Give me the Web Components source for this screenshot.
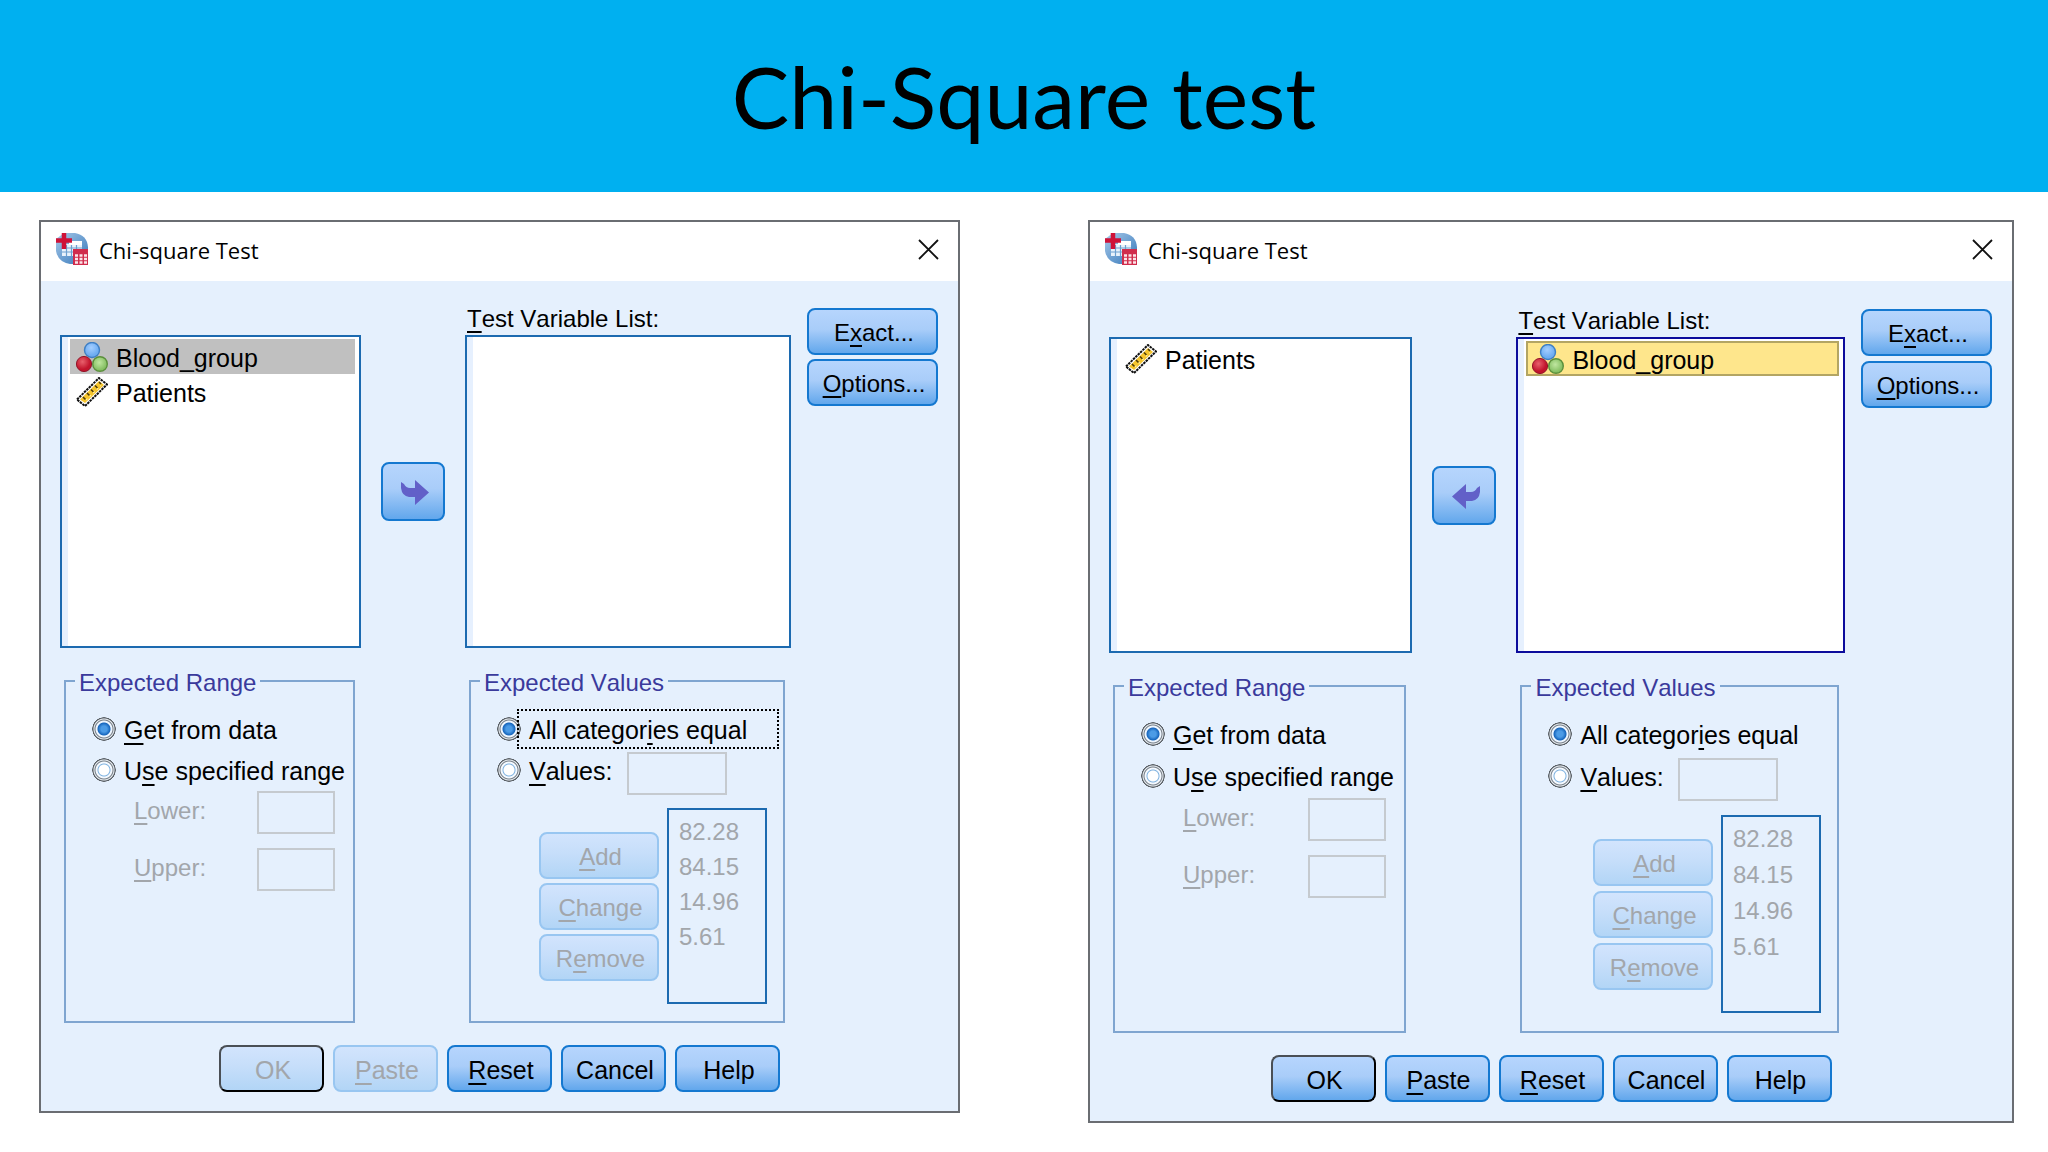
<!DOCTYPE html>
<html lang="en">
<head>
<meta charset="utf-8">
<title>Chi-Square test</title>
<style>
  html, body { margin: 0; background: #fff; }
  body { font-family: "Liberation Sans", Arial, sans-serif; color: #000; }
</style>
</head>
<body>
<slide-page>
  <span slot="title">Chi-Square test</span>
  <chi-dialog state="before"></chi-dialog>
  <chi-dialog state="after"></chi-dialog>
</slide-page>

<script>
const define = (name, html, setup) => {
  const template = document.createElement('template');
  customElements.define(name, class extends HTMLElement {
    connectedCallback() {
      if (this.shadowRoot) return;
      const root = this.attachShadow({ mode: 'open' });
      template.innerHTML = typeof html === 'function' ? html(this) : html;
      root.append(template.content.cloneNode(true));
      if (setup) setup(this, root);
    }
  });
};

const mnemonic = `::slotted(u) { text-decoration: underline; text-decoration-thickness: 2px; text-underline-offset: 4px; text-decoration-skip-ink: none; }`;

const icons = {
  nominal: `<svg viewBox="0 0 32 30" width="32" height="30" aria-hidden="true">
    <defs>
      <radialGradient id="b" cx=".45" cy=".35"><stop offset="0" stop-color="#a4ceff"/><stop offset="1" stop-color="#6eadf2"/></radialGradient>
      <radialGradient id="r" cx=".4" cy=".35"><stop offset="0" stop-color="#e8606c"/><stop offset="1" stop-color="#c2142c"/></radialGradient>
      <radialGradient id="g" cx=".45" cy=".4"><stop offset="0" stop-color="#c0e6a0"/><stop offset="1" stop-color="#86c064"/></radialGradient>
    </defs>
    <circle cx="16" cy="8" r="7.500" fill="url(#b)" stroke="#3f7fc4" stroke-width="1.400"/>
    <circle cx="24" cy="22" r="7.300" fill="url(#g)" stroke="#5b8f3c" stroke-width="1.400"/>
    <circle cx="8" cy="22" r="7.600" fill="url(#r)" stroke="#93162a" stroke-width="1"/>
  </svg>`,
  scale: `<svg viewBox="0 0 32 30" width="32" height="30" aria-hidden="true">
    <path d="M1 22.500 L23 1 L31 7.500 L9 29 Z" fill="#fff" stroke="#111" stroke-width="2" stroke-dasharray="2.500 .8"/>
    <path d="M4 22.500 L23 4 L28 8 L9 26 Z" fill="#f6c52c"/>
    <path d="M7 20 l2.500 2.500 M11 16 l2.500 2.500 M15 12.500 l2.500 2.500 M19 8.500 l2.500 2.500 M23 5 l2 2" stroke="#4b3a08" stroke-width="1.600"/>
    <path d="M10 23 L25 8.500" stroke="#fff0a0" stroke-width="1.200" stroke-dasharray="2 3"/>
  </svg>`,
  app: `<svg viewBox="0 0 32 32" width="32" height="32" aria-hidden="true">
    <defs><linearGradient id="s" x1="0" y1="0" x2="1" y2="1"><stop offset="0" stop-color="#a9c9e8"/><stop offset=".6" stop-color="#6298cd"/><stop offset="1" stop-color="#3a76b4"/></linearGradient></defs>
    <path d="M8 0 H19 Q31 2 32 14 V31 H14 Q2 29 0 18 V6 Z" fill="url(#s)"/>
    <rect x="6" y="11" width="20" height="12" fill="#e9f2fb"/>
    <rect x="13" y="8" width="13" height="4" fill="#fff"/>
    <path d="M6 15 H26 M6 19 H26 M10.500 12 V23 M15.500 12 V23 M20.500 12 V23" stroke="#6c9fd0" stroke-width="1.200"/>
    <path d="M8 0 V16 M0 7.500 H16" stroke="#cf1238" stroke-width="4.500"/>
    <rect x="17" y="16" width="15" height="16" fill="#d02c4c"/>
    <path d="M19 22.500 h3 M23.500 22.500 h3 M28 22.500 h3 M19 26 h3 M23.500 26 h3 M28 26 h3 M19 29.500 h3 M23.500 29.500 h3 M28 29.500 h3" stroke="#fbe4e8" stroke-width="2.300"/>
  </svg>`,
  arrow: `<svg viewBox="0 0 28 25" width="28" height="25" aria-hidden="true">
    <path d="M0 2 L3 4 Q5 8 9 8 H14 V0 L28 12.500 L14 25 V17 H8 Q1 16 0 8 Z" fill="#6260c8"/></svg>`,
  close: `<svg viewBox="0 0 21 21" width="21" height="21" aria-hidden="true">
    <path d="M1 1 L20 20 M20 1 L1 20" stroke="#111" stroke-width="1.800"/></svg>`
};

define('slide-page', `
  <style>
    :host { display: block; }
    header { display: flex; align-items: center; justify-content: center; height: 192px; background: #00b0f0; }
    h1 { margin: 0; font: 400 86px/100px Lato, sans-serif; }
    main { display: grid; grid-template-columns: 921fr 926fr; align-items: start; gap: 128px; padding: 28px 34px 28px 39px; }
  </style>
  <header><h1><slot name="title"></slot></h1></header>
  <main><slot></slot></main>`);

define('push-button', host => `
  <style>
    :host { display: block; }
    button {
      display: flex; align-items: center; justify-content: center; box-sizing: border-box;
      width: 100%; height: 47px; margin: 0; padding: 2px 0 0 3px;
      border: 2px solid #1478d0; border-radius: 8px;
      background: linear-gradient(#b6d5fd, #a9cdf9 45%, #62a7ec);
      font: inherit; font-kerning: none; white-space: pre; color: #000;
    }
    button:disabled { border-color: #98c6f1; background: linear-gradient(#d2e4fd, #c6defa 45%, #b2d5f6); color: #a2a6ab; }
    :host([default]) button { border-color: #4a4f55 #000 #000 #4a4f55; }
    :host([tall]) button { height: 59px; }
    :host([flip]) svg { transform: scaleX(-1); }
    ${mnemonic}
  </style>
  <button type="button" ${host.hasAttribute('disabled') ? 'disabled' : ''} ${host.title ? `aria-label="${host.title}"` : ''}><slot></slot>${host.hasAttribute('tall') ? icons.arrow : ''}</button>`);

define('variable-item', host => `
  <style>
    :host { display: flex; align-items: center; gap: 8px; box-sizing: border-box; height: 35px; margin: 0 4px 0 8px; padding: 0 4px; border: 2px solid transparent; white-space: nowrap; font-kerning: none; }
    :host([highlight="idle"]) { background: #c0c0c0; border-color: #c0c0c0; }
    :host([highlight="active"]) { background: #fee68c; border-color: #b3a563; }
    svg { flex: none; }
    span { padding-top: 2px; }
  </style>
  ${icons[host.getAttribute('measure')]}<span><slot></slot></span>`,
  host => host.setAttribute('role', 'option'));

define('variable-list', `
  <style>
    :host { display: block; box-sizing: border-box; padding-top: 2px; border: 2px solid #1c6ab0; background: linear-gradient(90deg, #e6f0fe 6px, #fff 6px); }
    :host([focused]) { border-color: #0c0c9c; }
  </style>
  <slot></slot>`,
  host => host.setAttribute('role', 'listbox'));

define('group-box', host => `
  <style>
    :host { display: block; min-width: 0; margin: 19px 6px 0 4px; }
    fieldset { box-sizing: border-box; height: 100%; min-width: 0; margin: 0; padding: 13px 16px 0 26px; border: 2px solid #7fa5d0; }
    legend { margin-left: -17px; padding: 4px 4px 0; line-height: 24px; font-size: 24px; color: #3a3a9c; white-space: nowrap; font-kerning: none; }
  </style>
  <fieldset><legend>${host.getAttribute('caption')}</legend><slot></slot></fieldset>`,
  host => host.addEventListener('pick', e => {
    for (const option of host.querySelectorAll('radio-option'))
      if (option !== e.target) option.shadowRoot.querySelector('input').checked = false;
  }));

define('radio-option', host => `
  <style>
    :host { display: flex; align-items: center; height: var(--row); }
    label { display: flex; align-items: center; flex: 1; height: 100%; white-space: nowrap; font-kerning: none; }
    input {
      appearance: none; flex: none; width: 24px; height: 24px; margin: 0; border-radius: 50%;
      background: radial-gradient(circle, #fff 0 5px, #7fb2e0 6px, #f4f9ff 7px, #f4f9ff 8px, #707880 9px, #eef3f8 10px, #5a6066 11px, #5a6066 11.5px, transparent 12px);
    }
    input:checked {
      background: radial-gradient(circle, #4b9be6 0 3px, #1766bd 6px, #eef6ff 7px, #eef6ff 8px, #707880 9px, #eef3f8 10px, #5a6066 11px, #5a6066 11.5px, transparent 12px);
    }
    span { flex: 1; box-sizing: border-box; padding: 2px 0 0 8px; }
    :host([focused]) { margin-right: -12px; }
    :host([focused]) span { height: 40px; margin-left: -4px; padding: 3px 0 0 10px; border: 2px dotted #000; line-height: 32px; }
    ${mnemonic}
  </style>
  <label><input type="radio" ${host.hasAttribute('checked') ? 'checked' : ''}><span><slot></slot></span></label>`,
  (host, root) => root.querySelector('input').addEventListener('change', () =>
    host.dispatchEvent(new CustomEvent('pick', { bubbles: true }))));

define('range-field', `
  <style>
    :host { display: block; }
    label { display: flex; align-items: center; justify-content: space-between; font-kerning: none; color: #a2a6ab; }
    span { padding-bottom: 3px; }
    input { box-sizing: border-box; width: 78px; height: 43px; margin: 0; border: 2px solid #c5cacf; border-radius: 0; background: transparent; font: inherit; }
    ${mnemonic}
  </style>
  <label><span><slot></slot></span><input type="text" disabled></label>`);

define('chi-dialog', host => {
  const after = host.getAttribute('state') === 'after';
  const off = after ? '' : 'disabled';
  return `
  <style>
    :host {
      --row: 41px; --head: 24px; --list: 313px; --group: 356px; --values: 196px; --line: 35px; --side: 27px; --gap: 4px;
      display: block; min-width: 0; border: 2px solid #6a6d72; background: #e5f0fd; font-size: 24px; line-height: 28px;
    }
    :host([state="after"]) { --row: 42px; --head: 26px; --list: 316px; --group: 361px; --values: 198px; --line: 36px; --side: 28px; --gap: 5px; }
    .bar { display: flex; align-items: center; gap: 11px; box-sizing: border-box; height: 59px; padding: 0 19px 5px 15px; background: #fff; }
    .bar h2 { flex: 1; margin: 0; padding-top: 2px; font: 400 22px/30px "Open Sans", sans-serif; }
    .bar button { display: flex; margin: 0; padding: 0; border: 0; background: none; }
    .body { display: grid; grid-template-columns: minmax(0, 301fr) 104px minmax(0, 326fr) 147px; padding: 0 20px 0 19px; }
    .head { padding: var(--head) 2px 2px; white-space: nowrap; font-kerning: none; }
    .head u { text-decoration-thickness: 2px; text-underline-offset: 4px; }
    variable-list { height: var(--list); }
    .source { padding-top: calc(var(--head) + 30px); }
    .move { display: flex; align-items: center; justify-content: center; padding-top: calc(var(--head) + 30px); }
    .move push-button { width: 64px; }
    .side { display: flex; flex-direction: column; gap: var(--gap); padding: var(--side) 0 0 16px; }
    group-box { height: var(--group); }
    .values-group { grid-column: 3; }
    variable-item, radio-option { font-size: 25px; }
    .range { display: flex; flex-direction: column; gap: 14px; margin: 1px 2px 0 42px; }
    .entry { display: flex; align-items: flex-start; height: var(--row); }
    .entry radio-option { width: 130px; }
    .entry input { box-sizing: border-box; width: 100px; height: 43px; margin: 3px 0 0; border: 2px solid #c5cacf; border-radius: 0; background: transparent; }
    .edit { display: flex; justify-content: flex-end; gap: 8px; margin-top: 18px; }
    .edit div { display: flex; flex-direction: column; gap: var(--gap); width: 120px; padding-top: 24px; }
    ul { box-sizing: border-box; width: 100px; height: var(--values); margin: 0; padding: 4px 10px; border: 2px solid #1c6ab0; list-style: none; line-height: var(--line); color: #a2a6ab; }
    footer { display: flex; justify-content: center; gap: 9px; padding: 22px 0 19px; font-size: 25px; }
    footer push-button { width: 105px; }
  </style>
  <div class="bar">${icons.app}<h2>Chi-square Test</h2><button type="button" aria-label="Close">${icons.close}</button></div>
  <div class="body">
    <div class="source"><variable-list aria-label="Variables">
      ${after ? '' : '<variable-item measure="nominal" highlight="idle">Blood_group</variable-item>'}
      <variable-item measure="scale">Patients</variable-item>
    </variable-list></div>
    <div class="move"><push-button tall ${after ? 'flip' : ''} title="Move"></push-button></div>
    <div>
      <div class="head" id="tested"><u>T</u>est Variable List:</div>
      <variable-list aria-labelledby="tested" ${after ? 'focused' : ''}>
        ${after ? '<variable-item measure="nominal" highlight="active">Blood_group</variable-item>' : ''}
      </variable-list>
    </div>
    <div class="side">
      <push-button>E<u>x</u>act...</push-button>
      <push-button><u>O</u>ptions...</push-button>
    </div>
    <group-box caption="Expected Range">
      <radio-option checked><u>G</u>et from data</radio-option>
      <radio-option>U<u>s</u>e specified range</radio-option>
      <div class="range">
        <range-field><u>L</u>ower:</range-field>
        <range-field><u>U</u>pper:</range-field>
      </div>
    </group-box>
    <group-box class="values-group" caption="Expected Values">
      <radio-option checked ${after ? '' : 'focused'}>All categor<u>i</u>es equal</radio-option>
      <div class="entry">
        <radio-option><u>V</u>alues:</radio-option>
        <input type="text" aria-label="Value" disabled>
      </div>
      <div class="edit">
        <div>
          <push-button disabled><u>A</u>dd</push-button>
          <push-button disabled><u>C</u>hange</push-button>
          <push-button disabled>R<u>e</u>move</push-button>
        </div>
        <ul><li>82.28</li><li>84.15</li><li>14.96</li><li>5.61</li></ul>
      </div>
    </group-box>
  </div>
  <footer>
    <push-button default ${off}>OK</push-button>
    <push-button ${off}><u>P</u>aste</push-button>
    <push-button><u>R</u>eset</push-button>
    <push-button>Cancel</push-button>
    <push-button>Help</push-button>
  </footer>`;
});
</script>
</body>
</html>
